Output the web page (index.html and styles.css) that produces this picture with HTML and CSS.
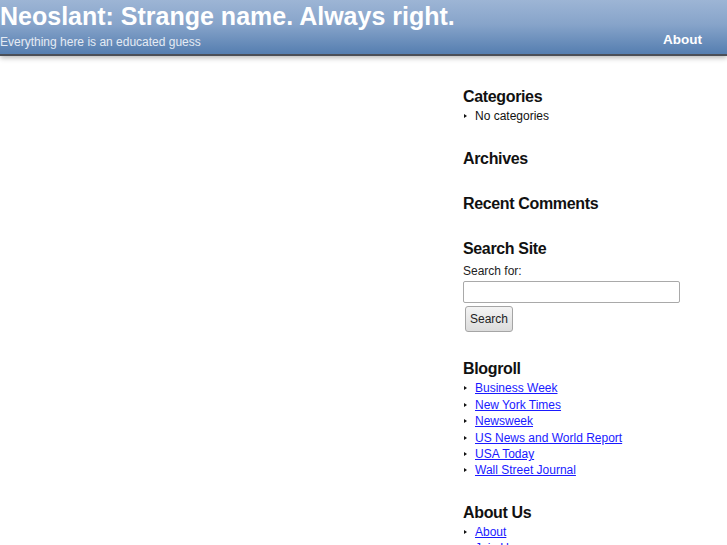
FILE: index.html
```html
<!DOCTYPE html>
<html lang="en">
<head>
<meta charset="utf-8">
<title>Neoslant: Strange name. Always right.</title>
<link rel="stylesheet" href="styles.css">
</head>
<body>
<header class="masthead">
  <div class="brand">
    <h1 class="site-title">Neoslant: Strange name. Always right.</h1>
    <p class="tagline">Everything here is an educated guess</p>
  </div>
  <nav class="topnav"><a href="#">About</a></nav>
</header>
<div class="page">
  <main class="content"></main>
  <aside class="sidebar">
    <section class="widget">
      <h2>Categories</h2>
      <ul class="list"><li>No categories</li></ul>
    </section>
    <section class="widget">
      <h2>Archives</h2>
      <ul class="list"></ul>
    </section>
    <section class="widget">
      <h2>Recent Comments</h2>
      <ul class="list"></ul>
    </section>
    <section class="widget widget-search">
      <h2>Search Site</h2>
      <form class="search">
        <label for="s">Search for:</label>
        <input id="s" type="text" class="search-input">
        <button type="button" class="search-btn">Search</button>
      </form>
    </section>
    <section class="widget widget-blogroll">
      <h2>Blogroll</h2>
      <ul class="list">
        <li><a href="#">Business Week</a></li>
        <li><a href="#">New York Times</a></li>
        <li><a href="#">Newsweek</a></li>
        <li><a href="#">US News and World Report</a></li>
        <li><a href="#">USA Today</a></li>
        <li><a href="#">Wall Street Journal</a></li>
      </ul>
    </section>
    <section class="widget">
      <h2>About Us</h2>
      <ul class="list">
        <li><a href="#">About</a></li>
        <li><a href="#">Join Us</a></li>
      </ul>
    </section>
  </aside>
</div>
</body>
</html>
```
FILE: styles.css
```css
html, body {
  margin: 0;
  padding: 0;
  background: #fff;
  font-family: "Liberation Sans", Arial, sans-serif;
  color: #111;
  overflow: hidden;
}

.masthead {
  display: flex;
  justify-content: space-between;
  align-items: stretch;
  height: 54px;
  background: linear-gradient(to bottom, #9db5d5 0%, #87a4ca 45%, #557eb0 100%);
  border-bottom: 2px solid #4b4f57;
  box-shadow: 0 2px 5px rgba(0, 0, 0, 0.28);
  position: relative;
  z-index: 1;
}

.brand {
  padding-top: 1px;
}

.site-title {
  margin: 0;
  font-size: 25px;
  line-height: 30px;
  font-weight: bold;
  color: #fff;
}

.tagline {
  margin: 4px 0 0;
  font-size: 12px;
  line-height: 14px;
  color: #e4ebf4;
}

.topnav {
  display: flex;
  align-items: flex-end;
  padding: 0 25px 6px 0;
}

.topnav a {
  color: #fff;
  font-weight: bold;
  font-size: 13.5px;
  text-decoration: none;
  line-height: 16px;
}

.page {
  display: grid;
  grid-template-columns: 463px 1fr;
}

.sidebar {
  padding-top: 31px;
  padding-right: 20px;
}

.widget {
  margin-bottom: 25px;
}

.widget h2 {
  margin: 0;
  font-size: 16px;
  line-height: 20px;
  font-weight: bold;
  color: #111;
  letter-spacing: -0.35px;
}

.list {
  list-style: none;
  margin: 1px 0 0;
  padding: 0;
  font-size: 12px;
  line-height: 16.4px;
}

.list li {
  position: relative;
  padding-left: 12px;
}

.list li::before {
  content: "";
  position: absolute;
  left: 1px;
  top: 6px;
  border-style: solid;
  border-width: 2.5px 0 2.5px 3px;
  border-color: transparent transparent transparent #111;
}

.list a {
  color: #1a1aff;
  text-decoration: underline;
}

.widget-search {
  margin-bottom: 27px;
}

.widget-blogroll {
  margin-bottom: 24px;
}

.search {
  display: flex;
  flex-direction: column;
  align-items: flex-start;
  font-size: 12px;
}

.search label {
  margin-top: 4px;
  line-height: 16px;
  color: #222;
}

.search-input {
  margin: 2px 0 0;
  width: 217px;
  height: 22px;
  box-sizing: border-box;
  border: 1px solid #a9a9a9;
  border-radius: 2px;
  background: #fff;
  padding: 0 3px;
}

.search-btn {
  margin: 3px 0 0 2px;
  width: 48px;
  height: 26px;
  box-sizing: border-box;
  border: 1px solid #a5a5a5;
  border-radius: 3px;
  background: linear-gradient(to bottom, #f4f4f4, #dcdcdc);
  font-family: "Liberation Sans", Arial, sans-serif;
  font-size: 12px;
  color: #222;
  padding: 0;
}
```
